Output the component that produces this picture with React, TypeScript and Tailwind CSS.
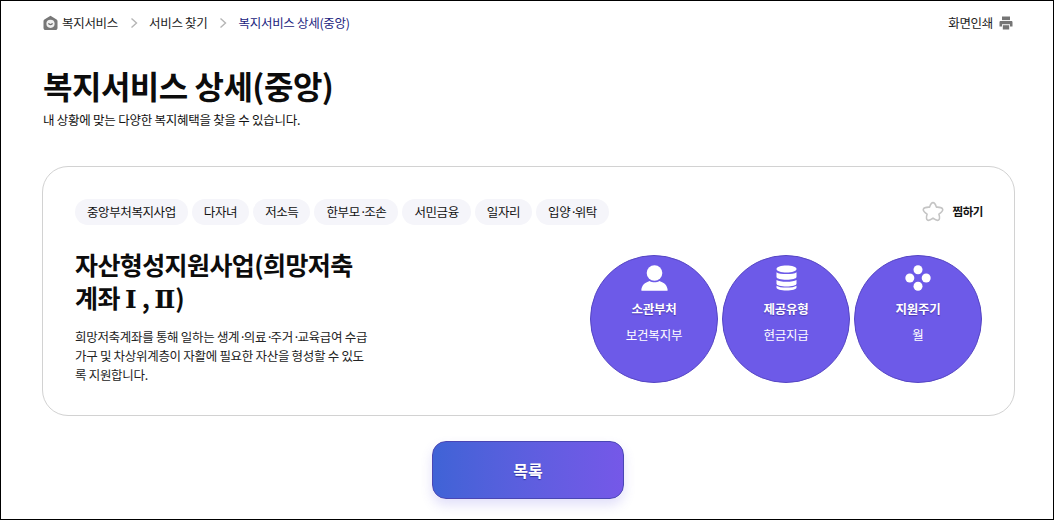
import React from "react";

function Crumb({ children, active }: { children: React.ReactNode; active?: boolean }) {
  return <span className={active ? "text-[#1a2380]" : "text-[#222]"}>{children}</span>;
}

function Sep() {
  return (
    <svg width="8" height="12" viewBox="0 0 8 12" className="mx-[11.5px]" fill="none" stroke="#b5b5b5" strokeWidth="1.4">
      <path d="M1.500 1.500 6.500 6 1.500 10.500" />
    </svg>
  );
}

function Dot() {
  return <span className="tracking-[-2.6px]">·</span>;
}

function Roman({ children }: { children: React.ReactNode }) {
  return <span className="font-['DejaVu_Serif',serif] leading-[0] tracking-[0]">{children}</span>;
}

function Circle({ icon, title, value }: { icon: React.ReactNode; title: string; value: string }) {
  return (
    <div className="flex h-[128px] w-[128px] flex-col items-center rounded-full border-[1.5px] border-[#5646c4] bg-[#6d5ae8] text-white">
      <div className="mt-[9px] flex h-[26px] items-center justify-center">{icon}</div>
      <div className="mt-[9px] text-[12.5px] font-bold leading-[18px] tracking-[-0.3px] [text-shadow:0_1px_1px_rgba(60,40,150,0.7)]">{title}</div>
      <div className="mt-[8px] text-[12.5px] leading-[18px] tracking-[-0.2px]">{value}</div>
    </div>
  );
}

export default function App() {
  const chips: React.ReactNode[] = [
    "중앙부처복지사업",
    "다자녀",
    "저소득",
    <React.Fragment key="a">한부모<Dot />조손</React.Fragment>,
    "서민금융",
    "일자리",
    <React.Fragment key="b">입양<Dot />위탁</React.Fragment>,
  ];
  return (
    <div className="flex h-[520px] w-[1054px] flex-col overflow-hidden border border-black bg-white font-['Noto_Sans_CJK_KR','Noto_Sans',sans-serif] text-[#111]">
      <header className="flex h-[44px] items-center justify-between pl-[42px] pr-[40px] text-[12.5px] tracking-[-0.3px]">
        <nav className="flex items-center">
          <svg width="15" height="16" viewBox="0 0 15 16" className="mr-[4px]">
            <path d="M7.500.8 13.600 4.400c.6.3.9.9.9 1.600v7c0 1.200-.9 2.100-2.100 2.100H2.600C1.400 15.100.5 14.200.5 13V6c0-.7.3-1.300.9-1.600z" fill="#777" />
            <circle cx="7.500" cy="8.800" r="4.100" fill="#efefef" />
            <path d="M5.400 8.400c.8 1.500 3.400 1.500 4.200 0" stroke="#6f6f6f" strokeWidth="1.200" fill="none" />
          </svg>
          <Crumb>복지서비스</Crumb>
          <Sep />
          <Crumb>서비스 찾기</Crumb>
          <Sep />
          <Crumb active>복지서비스 상세(중앙)</Crumb>
        </nav>
        <div className="flex items-center gap-[6px] text-[#222]">
          <span>화면인쇄</span>
          <svg width="14" height="14" viewBox="0 0 14 14" fill="#757575">
            <path d="M3 .5h8v3.600H3z" />
            <path d="M1.800 4.900h10.400c.8 0 1.300.5 1.300 1.300v4.200H11V8.200H3v2.200H.5V6.200c0-.8.5-1.300 1.300-1.300z" />
            <path d="M3.800 9.200h6.400v4.300H3.800z" />
          </svg>
        </div>
      </header>

      <div className="pl-[42px]">
        <h1 className="mt-[17px] text-[32px] font-bold leading-[46px] tracking-[-0.5px] text-[#0c0c0c]">복지서비스 상세(중앙)</h1>
        <p className="mt-[3px] text-[12.5px] leading-[18px] tracking-[-0.25px]">내 상황에 맞는 다양한 복지혜택을 찾을 수 있습니다.</p>
      </div>

      <section className="mx-[41px] mt-[37px] h-[250px] w-[973px] rounded-[26px] border border-[#d2d2d2] bg-white px-[32px] pt-[32px]">
        <div className="flex items-center justify-between">
          <div className="flex gap-[4px]">
            {chips.map((c, i) => (
              <span key={i} className="flex h-[26px] items-center rounded-full bg-[#f5f5fa] px-[12px] text-[12.5px] tracking-[-0.4px] text-[#111]">
                <span>{c}</span>
              </span>
            ))}
          </div>
          <div className="mr-[-1px] flex items-center gap-[8px]">
            <svg width="22" height="22" viewBox="0 0 24 24" fill="none" stroke="#c4c4c4" strokeWidth="1.700" strokeLinejoin="round">
              <path d="M12 1.800c2 0 3 2.600 3.700 4.900 2.800-.1 6.400.4 6.900 2.400.4 2-2.200 3.800-4.200 5.200.8 2.500 1.400 5.400-.4 6.600-1.700 1-4-.7-6-2.200-2 1.500-4.300 3.200-6 2.200-1.800-1.200-1.200-4.100-.4-6.600-2-1.400-4.600-3.200-4.200-5.200.5-2 4.100-2.500 6.900-2.400C9 4.400 10 1.800 12 1.800z" />
            </svg>
            <span className="text-[11.5px] font-bold tracking-[-0.4px] text-[#111]">찜하기</span>
          </div>
        </div>

        <div className="mt-[21px] flex justify-between">
          <div className="w-[300px]">
            <h2 className="mt-[2px] text-[25px] font-bold leading-[33px] tracking-[-0.6px] text-[#0c0c0c]">
              <span className="block">자산형성지원사업(희망저축</span>
              <span className="block">
                계좌 <Roman>Ⅰ</Roman> , <Roman>Ⅱ</Roman>)
              </span>
            </h2>
            <p className="mt-[13px] text-[12.5px] leading-[19px] tracking-[-0.3px] text-[#222]">
              <span className="block whitespace-nowrap">
                희망저축계좌를 통해 일하는 생계<Dot />의료<Dot />주거<Dot />교육급여 수급
              </span>
              <span className="block whitespace-nowrap">가구 및 차상위계층이 자활에 필요한 자산을 형성할 수 있도</span>
              <span className="block whitespace-nowrap">록 지원합니다.</span>
            </p>
          </div>
          <div className="mt-[9px] flex gap-[4px]">
            <Circle
              title="소관부처"
              value="보건복지부"
              icon={
                <svg width="27" height="26" viewBox="0 0 27 26" fill="white">
                  <ellipse cx="13.500" cy="8" rx="7.800" ry="7.800" />
                  <path d="M.3 25.200c.4-5 3.400-7.800 8.400-9.300 1.400 1 3 1.400 4.800 1.400s3.400-.4 4.800-1.400c5 1.500 8 4.300 8.400 9.300 0 .3-.2.5-.5.5H.8c-.3 0-.5-.2-.5-.5z" />
                </svg>
              }
            />
            <Circle
              title="제공유형"
              value="현금지급"
              icon={
                <svg width="21" height="26" viewBox="0 0 21 26" fill="white">
                  <path d="M.5 4C.5 1.800 5 .5 10.500.5s10 1.300 10 3.500-4.500 3.500-10 3.500S.5 6.200.5 4z" />
                  <path d="M.5 7.200c1.800 1.500 5.500 1.800 10 1.800s8.200-.3 10-1.800V12c0 1.700-4.500 2.700-10 2.700S.5 13.700.5 12z" />
                  <path d="M.5 15c1.800 1.400 5.500 1.700 10 1.700s8.200-.3 10-1.700v3.800c0 1.700-4.500 2.700-10 2.700S.5 20.500.5 18.800z" />
                  <path d="M.5 20.800c1.800 1.400 5.500 1.700 10 1.700s8.200-.3 10-1.700V22.500c0 2-4.500 3-10 3s-10-1-10-3z" />
                </svg>
              }
            />
            <Circle
              title="지원주기"
              value="월"
              icon={
                <svg width="26" height="26" viewBox="0 0 26 26" fill="white">
                  <circle cx="13" cy="4.800" r="4.500" />
                  <circle cx="4.800" cy="13" r="4.500" />
                  <circle cx="21.200" cy="13" r="4.500" />
                  <circle cx="13" cy="21.200" r="4.500" />
                </svg>
              }
            />
          </div>
        </div>
      </section>

      <div className="ml-[2px] mt-[25px] flex justify-center">
        <button className="flex h-[58px] w-[192px] items-center justify-center rounded-[14px] border border-[#4a46b4] bg-gradient-to-r from-[#3f63d6] to-[#7558e8] text-[16px] font-bold text-white shadow-[0_6px_12px_rgba(90,80,220,0.18)] [text-shadow:0_1px_1px_rgba(20,20,120,0.6)]">
          목록
        </button>
      </div>
    </div>
  );
}
